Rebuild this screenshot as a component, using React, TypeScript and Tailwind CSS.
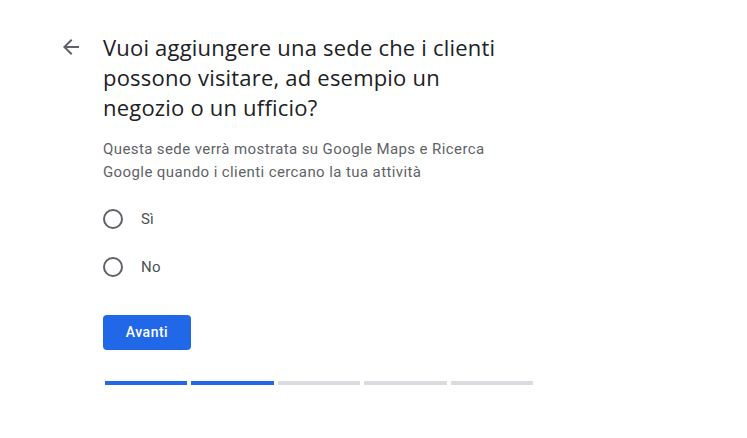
import React, { useState } from "react";

function ArrowBack() {
    return (
        <svg width="24" height="24" viewBox="0 0 24 24" fill="#5f6368">
            <path d="M20 11H7.83l5.59-5.59L12 4l-8 8 8 8 1.41-1.41L7.83 13H20v-2z" />
        </svg>
    );
}

function Radio({ label, checked, onSelect }: { label: string; checked: boolean; onSelect: () => void }) {
    return (
        <label className="flex h-12 items-center cursor-pointer" onClick={onSelect}>
            <span className="flex h-5 w-5 items-center justify-center rounded-full border-2 border-[#5f6368]">
                {checked && <span className="h-2.5 w-2.5 rounded-full bg-[#1a73e8]" />}
            </span>
            <span className="ml-[18px] text-[15px] tracking-[0.2px] text-[#4d5156]">{label}</span>
        </label>
    );
}

export default function App() {
    const [choice, setChoice] = useState<string | null>(null);
    const steps = [true, true, false, false, false];

    return (
        <div className="min-h-screen bg-white font-['Roboto',sans-serif]">
            <div className="flex pl-[59px] pt-[32px]">
                <button className="mt-[3px] h-6 w-6">
                    <ArrowBack />
                </button>
                <div className="ml-[20px] w-[432px]">
                    <h1 className="max-w-[415px] font-['Open_Sans',sans-serif] text-[22px] leading-[30px] tracking-[0.2px] text-[#202124]">
                        Vuoi aggiungere una sede che i clienti possono visitare, ad esempio un negozio o un ufficio?
                    </h1>
                    <p className="mt-4 text-[15px] leading-[23px] tracking-[0.4px] text-[#5f6368]">
                        Questa sede verrà mostrata su Google Maps e Ricerca Google quando i clienti cercano la tua attività
                    </p>
                    <div className="mt-[11px]">
                        <Radio label="Sì" checked={choice === "si"} onSelect={() => setChoice("si")} />
                        <Radio label="No" checked={choice === "no"} onSelect={() => setChoice("no")} />
                    </div>
                    <button className="mt-[24px] h-[35px] w-[88px] rounded bg-[#2168e8] text-[14px] font-medium tracking-[0.5px] text-white">
                        Avanti
                    </button>
                    <div className="mt-[31px] ml-[2px] flex w-[428px] gap-1">
                        {steps.map((done, i) => (
                            <div key={i} className={done ? "h-1 flex-1 bg-[#2168e8]" : "h-1 flex-1 bg-[#dadce0]"} />
                        ))}
                    </div>
                </div>
            </div>
        </div>
    );
}
